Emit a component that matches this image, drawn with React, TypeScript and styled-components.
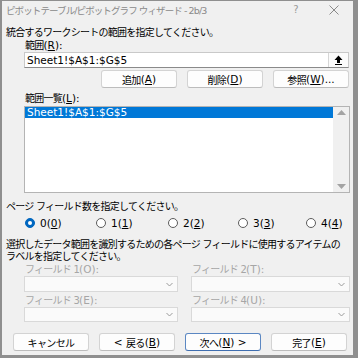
import React from "react";
import styled, { createGlobalStyle } from "styled-components";

const Global = createGlobalStyle`
  html, body { margin: 0; padding: 0; background: #8f8f8f; }
  body { width: 358px; height: 358px; overflow: hidden; }
  * { box-sizing: border-box; }
`;

const FONT = `"DejaVu Sans", "Noto Sans CJK JP", sans-serif`;

const Frame = styled.div`
  margin: 1px 0 0 2px;
  width: 351px;
  height: 354px;
  background: #f0f0f0;
  font-family: ${FONT};
  font-size: 10px;
  color: #000;
  display: flex;
  flex-direction: column;
  padding: 0 3px 0 4px;
`;

const TitleBar = styled.div`
  height: 17px;
  display: flex;
  align-items: center;
  margin-left: -1px;
`;

const TitleText = styled.div`
  flex: 1;
  color: #8a8a8a;
  font-size: 9.5px;
  letter-spacing: -0.9px;
  white-space: nowrap;
  padding-left: 1px;
`;

const Help = styled.div`
  width: 20px;
  color: #9a9a9a;
  font-size: 10px;
  text-align: center;
  margin-right: 23px;
`;

const Close = styled.svg`
  width: 10px;
  height: 10px;
  margin-right: 11px;
`;

const Line = styled.div<{ $mt?: number; $indent?: number; $lh?: number; $muted?: boolean }>`
  margin-top: ${(p) => p.$mt ?? 0}px;
  margin-left: ${(p) => p.$indent ?? 0}px;
  line-height: ${(p) => p.$lh ?? 13}px;
  height: ${(p) => p.$lh ?? 13}px;
  white-space: nowrap;
  letter-spacing: -0.75px;
  color: ${(p) => (p.$muted ? "#a6a6a6" : "#000")};
`;

const Mn = styled.span`
  text-decoration: underline;
  text-underline-offset: 1px;
`;

const Latin = styled.span`
  letter-spacing: 0;
  font-size: 10.5px;
`;

const InputBox = styled.div`
  margin-left: 18px;
  margin-right: 1px;
  height: 16px;
  background: #fff;
  border: 1px solid #c9c9c9;
  border-bottom-color: #8a8a8a;
  display: flex;
  align-items: center;
  padding-left: 2px;
`;

const InputText = styled.div`
  flex: 1;
  font-size: 10.5px;
  white-space: nowrap;
`;

const PickBtn = styled.div`
  width: 20px;
  height: 14px;
  border-left: 1px solid #d6d6d6;
  background: #fbfbfb;
  display: flex;
  align-items: center;
  justify-content: center;
`;

const ButtonRow = styled.div<{ $mt: number; $start?: boolean }>`
  margin-top: ${(p) => p.$mt}px;
  display: flex;
  justify-content: ${(p) => (p.$start ? "flex-start" : "flex-end")};
  padding-right: 1px;
  padding-left: ${(p) => (p.$start ? 7 : 0)}px;
  gap: 10px;
`;

const Button = styled.div<{ $default?: boolean }>`
  width: 76px;
  height: 18px;
  background: #fdfdfd;
  border: 1px solid ${(p) => (p.$default ? "#5b87c2" : "#d3d3d3")};
  border-bottom-color: ${(p) => (p.$default ? "#3f6eb0" : "#bcbcbc")};
  border-radius: 3px;
  display: flex;
  align-items: center;
  justify-content: center;
  letter-spacing: -0.6px;
  white-space: pre;
`;

const ListBox = styled.div`
  margin: 1px 0 0 18px;
  height: 87px;
  background: #fff;
  border: 1px solid #b4b4b4;
  display: flex;
`;

const ListItems = styled.div`
  flex: 1;
`;

const ListItem = styled.div<{ $selected?: boolean }>`
  height: 11px;
  line-height: 11px;
  padding-left: 2px;
  font-size: 10.5px;
  background: ${(p) => (p.$selected ? "#0078d7" : "transparent")};
  color: ${(p) => (p.$selected ? "#fff" : "#000")};
  white-space: nowrap;
`;

const ScrollBar = styled.div`
  width: 16px;
  background: #f0f0f0;
  display: flex;
  flex-direction: column;
  justify-content: space-between;
  align-items: center;
  padding: 3px 0 3px;
`;

const RadioRow = styled.div`
  margin: 3px 0 0 19px;
  height: 14px;
  display: grid;
  grid-template-columns: 71px 72px 70px 68px auto;
  align-items: center;
`;

const RadioItem = styled.div`
  display: flex;
  align-items: center;
  gap: 5px;
  font-size: 10.5px;
  white-space: nowrap;
`;

const RadioCircle = styled.div<{ $on?: boolean }>`
  width: 10px;
  height: 10px;
  border-radius: 50%;
  border: 1px solid ${(p) => (p.$on ? "#0067c0" : "#5c5c5c")};
  background: ${(p) => (p.$on ? "#0067c0" : "#fff")};
  display: flex;
  align-items: center;
  justify-content: center;
  &::after {
    content: "";
    width: 4px;
    height: 4px;
    border-radius: 50%;
    background: ${(p) => (p.$on ? "#fff" : "transparent")};
  }
`;

const FieldGrid = styled.div`
  margin-left: 18px;
  display: grid;
  grid-template-columns: 154px 159px;
  column-gap: 13px;
`;

const FieldCell = styled.div``;

const Combo = styled.div<{ $h: number }>`
  height: ${(p) => p.$h}px;
  background: #fafafa;
  border: 1px solid #d9d9d9;
  display: flex;
  justify-content: flex-end;
  align-items: center;
  padding-right: 4px;
`;

const Chevron = styled.svg`
  width: 7px;
  height: 5px;
`;

const Triangle = styled.svg`
  width: 9px;
  height: 5px;
`;

const fields = [
  { label: "フィールド 1", key: "O", mt: 0, h: 16 },
  { label: "フィールド 2", key: "T", mt: 0, h: 16 },
  { label: "フィールド 3", key: "E", mt: 2, h: 15 },
  { label: "フィールド 4", key: "U", mt: 2, h: 15 },
];

const radios = ["0", "1", "2", "3", "4"];

export default function App() {
  return (
    <>
      <Global />
      <Frame>
        <TitleBar>
          <TitleText>ピボットテーブル/ピボットグラフ ウィザード - 2b/3</TitleText>
          <Help>?</Help>
          <Close viewBox="0 0 10 10">
            <path d="M0.5 0.5 L9.5 9.5 M9.5 0.5 L0.5 9.5" stroke="#8a8a8a" strokeWidth="1" />
          </Close>
        </TitleBar>

        <Line $mt={8}>統合するワークシートの範囲を指定してください。</Line>
        <Line $indent={19}>
          範囲<Latin>(<Mn>R</Mn>):</Latin>
        </Line>
        <InputBox>
          <InputText>Sheet1!$A$1:$G$5</InputText>
          <PickBtn>
            <svg width="9" height="10" viewBox="0 0 9 10">
              <path d="M4.5 0.5 L8.5 5 L6 5 L6 8 L3 8 L3 5 L0.5 5 Z" fill="#000" />
              <rect x="1" y="9" width="7" height="1" fill="#000" />
            </svg>
          </PickBtn>
        </InputBox>
        <ButtonRow $mt={2}>
          <Button>
            追加<Latin>(<Mn>A</Mn>)</Latin>
          </Button>
          <Button>
            削除<Latin>(<Mn>D</Mn>)</Latin>
          </Button>
          <Button>
            参照<Latin>(<Mn>W</Mn>)...</Latin>
          </Button>
        </ButtonRow>

        <Line $mt={4} $indent={19}>
          範囲一覧<Latin>(<Mn>L</Mn>):</Latin>
        </Line>
        <ListBox>
          <ListItems>
            <ListItem $selected>Sheet1!$A$1:$G$5</ListItem>
          </ListItems>
          <ScrollBar>
            <Triangle viewBox="0 0 9 5">
              <path d="M0 5 L4.5 0 L9 5 Z" fill="#a3a3a3" />
            </Triangle>
            <Triangle viewBox="0 0 9 5">
              <path d="M0 0 L9 0 L4.5 5 Z" fill="#a3a3a3" />
            </Triangle>
          </ScrollBar>
        </ListBox>

        <Line $mt={7}>ページ フィールド数を指定してください。</Line>
        <RadioRow>
          {radios.map((r, i) => (
            <RadioItem key={r}>
              <RadioCircle $on={i === 0} />
              <span>
                {r}(<Mn>{r}</Mn>)
              </span>
            </RadioItem>
          ))}
        </RadioRow>

        <Line $mt={9} $lh={12}>
          選択したデータ範囲を識別するための各ページ フィールドに使用するアイテムの
        </Line>
        <Line $lh={12}>ラベルを指定してください。</Line>

        <FieldGrid>
          {fields.map((f) => (
            <FieldCell key={f.key}>
              <Line $mt={f.mt} $indent={1} $muted>
                {f.label}
                <Latin>({f.key}):</Latin>
              </Line>
              <Combo $h={f.h}>
                <Chevron viewBox="0 0 7 5">
                  <path d="M0.5 1 L3.5 4 L6.5 1" stroke="#9a9a9a" strokeWidth="1" fill="none" />
                </Chevron>
              </Combo>
            </FieldCell>
          ))}
        </FieldGrid>

        <ButtonRow $mt={11} $start>
          <Button>キャンセル</Button>
          <Button>
            <Latin>{"<\u00a0"}</Latin>戻る<Latin>(<Mn>B</Mn>)</Latin>
          </Button>
          <Button $default>
            次へ<Latin>
              (<Mn>N</Mn>){"\u00a0>"}
            </Latin>
          </Button>
          <Button>
            完了<Latin>(<Mn>E</Mn>)</Latin>
          </Button>
        </ButtonRow>
      </Frame>
    </>
  );
}
